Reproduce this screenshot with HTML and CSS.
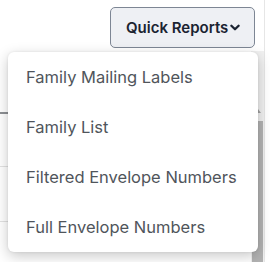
FILE: index.html
```html
<!DOCTYPE html>
<html>
<head>
<meta charset="utf-8">
<link rel="stylesheet" href="styles.css">
</head>
<body>
<div class="page">
  <div class="toolbar">
    <button class="qr-btn">Quick Reports<svg class="chev" viewBox="0 0 10 8" width="10" height="8"><path d="M1.4 1.8 L5 5.3 L8.6 1.8" fill="none" stroke="currentColor" stroke-width="2.3" stroke-linecap="round" stroke-linejoin="round"/></svg></button>
  </div>
  <div class="table-area">
    <div class="rows">
      <div class="row r1"></div>
      <div class="row r2"></div>
      <div class="row r3"></div>
      <div class="row r4"></div>
    </div>
    <div class="scrollbar">
      <div class="arrow"></div>
      <div class="thumb"></div>
    </div>
  </div>
  <ul class="menu">
    <li class="item">Family Mailing Labels</li>
    <li class="item">Family List</li>
    <li class="item">Filtered Envelope Numbers</li>
    <li class="item">Full Envelope Numbers</li>
  </ul>
</div>
</body>
</html>
```

FILE: styles.css
```css
* { box-sizing: border-box; }
html, body { margin: 0; padding: 0; background: #fff; }
body { font-family: Inter, "Open Sans", sans-serif; }
.page {
  position: relative;
  width: 270px;
  height: 262px;
  overflow: hidden;
  display: flex;
  flex-direction: column;
}
.toolbar {
  display: flex;
  justify-content: flex-end;
  padding: 7px 9px 0 0;
  height: 51px;
  border-right: 1px solid #e6e6e6;
  width: 265px;
}
.qr-btn {
  width: 145px;
  height: 41px;
  background: #eef0f4;
  border: 1px solid #7d8694;
  border-radius: 5px;
  font-family: inherit;
  font-size: 15px;
  font-weight: 600;
  color: #1a2331;
  display: flex;
  align-items: center;
  justify-content: flex-start;
  gap: 2px;
  padding: 0 0 0 15px;
}
.chev { margin-top: 1px; }
.table-area {
  flex: 1;
  display: flex;
  width: 265px;
  border-right: 1px solid #e6e6e6;
}
.rows { flex: 1; display: flex; flex-direction: column; }
.row { border-bottom: 1px solid #e2e2e2; }
.r1 { height: 63px; border-bottom: 2px solid #8d9094; }
.r2 { height: 53px; }
.r3 { height: 55px; }
.r4 { flex: 1; border-bottom: none; }
.scrollbar {
  width: 13px;
  background: #f1f1f1;
  display: flex;
  flex-direction: column;
  align-items: center;
  padding-top: 58px;
}
.arrow {
  width: 0; height: 0;
  border-left: 3px solid transparent;
  border-right: 3px solid transparent;
  border-bottom: 4px solid #a3a3a3;
  margin-bottom: 8px;
}
.thumb { flex: 1; width: 11px; background: #b3b3b3; }
.menu {
  position: absolute;
  left: 8px;
  top: 52px;
  width: 250px;
  margin: 0;
  padding: 0;
  list-style: none;
  background: #fff;
  border-radius: 6px;
  box-shadow: 0 4px 14px rgba(0,0,0,0.22), 0 0 3px rgba(0,0,0,0.08);
}
.item {
  height: 50px;
  display: flex;
  align-items: center;
  padding-left: 18px;
  padding-bottom: 1px;
  font-size: 16.5px;
  color: #50555b;
}
```
